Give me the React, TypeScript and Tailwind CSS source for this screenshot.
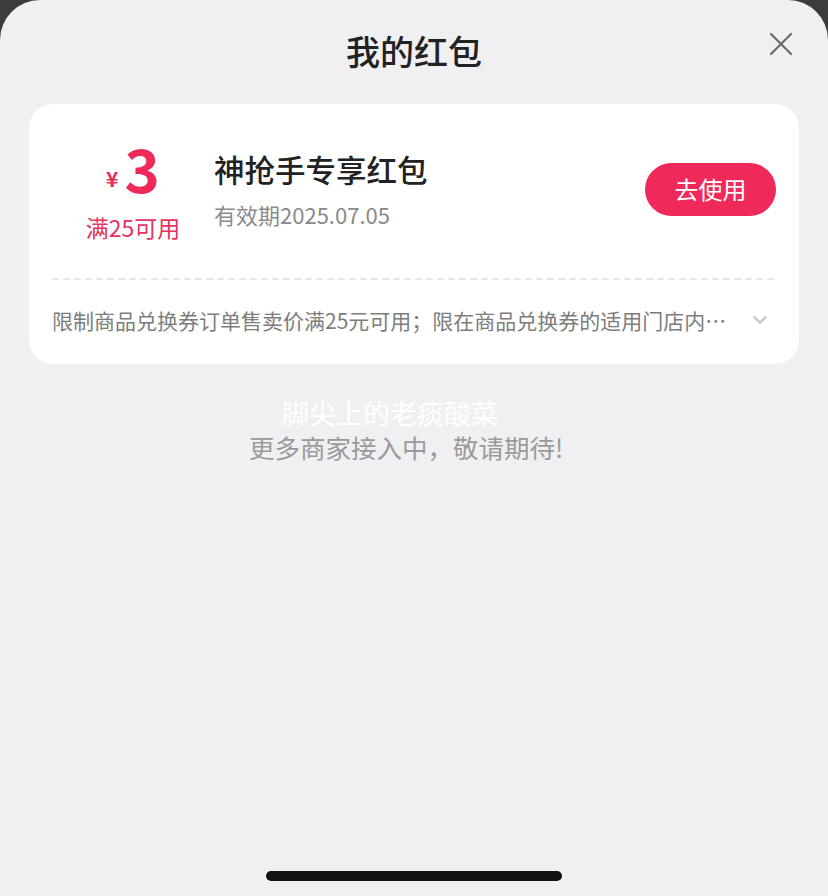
import { ChevronDown } from "lucide-react";

const font = { fontFamily: '"Noto Sans CJK SC", "Noto Sans", sans-serif' };

const CloseIcon = () => (
    <svg width="24" height="24" viewBox="0 0 24 24" fill="none">
        <path d="M2 2L22 22M22 2L2 22" stroke="#6b6b6b" strokeWidth="2.2" strokeLinecap="round" />
    </svg>
);

const CouponCard = () => {
    return (
        <div className="mx-[29px] mt-[29px] bg-white rounded-[24px]">
            <div className="h-[174px] flex items-center pl-[52px] pr-[23px] pb-[4px]">
                <div className="w-[104px] flex flex-col items-center">
                    <div className="flex items-end text-[#f0295b] leading-none">
                        <span className="text-[21px] font-bold mb-[8px] mr-[6px]">¥</span>
                        <span className="text-[60px] font-bold leading-[60px]">3</span>
                    </div>
                    <div className="text-[23px] text-[#e8325e] mt-[16px] leading-[28px]">满25可用</div>
                </div>

                <div className="ml-[29px] flex flex-col">
                    <div className="text-[30.5px] font-medium text-[#222] leading-[40px]">神抢手专享红包</div>
                    <div className="text-[22px] text-[#8a8a8a] leading-[30px] mt-[10px]">有效期2025.07.05</div>
                </div>

                <button className="ml-auto w-[131px] h-[53px] rounded-full bg-[#f0295b] text-white text-[24px] leading-none">
                    去使用
                </button>
            </div>

            <div className="mx-[23px] h-[2px] bg-[linear-gradient(to_right,#e6e6e6_65%,transparent_65%)] bg-[length:11px_2px]"></div>

            <div className="h-[84px] flex items-center pl-[23px] pr-[28px] pb-[4px]">
                <div className="w-[686px] truncate text-[21px] text-[#7d7d7d] leading-[28px]">
                    限制商品兑换券订单售卖价满25元可用；限在商品兑换券的适用门店内使用
                </div>
                <ChevronDown size={22} strokeWidth={2.6} className="text-[#c6c6c6] ml-auto shrink-0" />
            </div>
        </div>
    );
};

export default function App() {
    return (
        <div className="w-[828px] h-[896px] bg-[#3c3c3c]" style={font}>
            <div className="relative h-full rounded-t-[40px] bg-[#f0f0f2] flex flex-col">
                <div className="pt-[26px] text-center text-[34px] font-medium text-[#222] leading-[49px]">我的红包</div>
                <button className="absolute top-[32px] right-[35px]">
                    <CloseIcon />
                </button>

                <CouponCard />

                <div className="mt-[32px] flex flex-col items-center">
                    <div className="pr-[48px] text-[27px] text-white leading-[34px]">脚尖上的老痰酸菜</div>
                    <div className="pr-[16px] text-[25.5px] text-[#9a9a9a] leading-[34px]">更多商家接入中，敬请期待!</div>
                </div>

                <div className="mt-auto mb-[15px] mx-auto w-[296px] h-[10px] rounded-full bg-[#111]"></div>
            </div>
        </div>
    );
}
